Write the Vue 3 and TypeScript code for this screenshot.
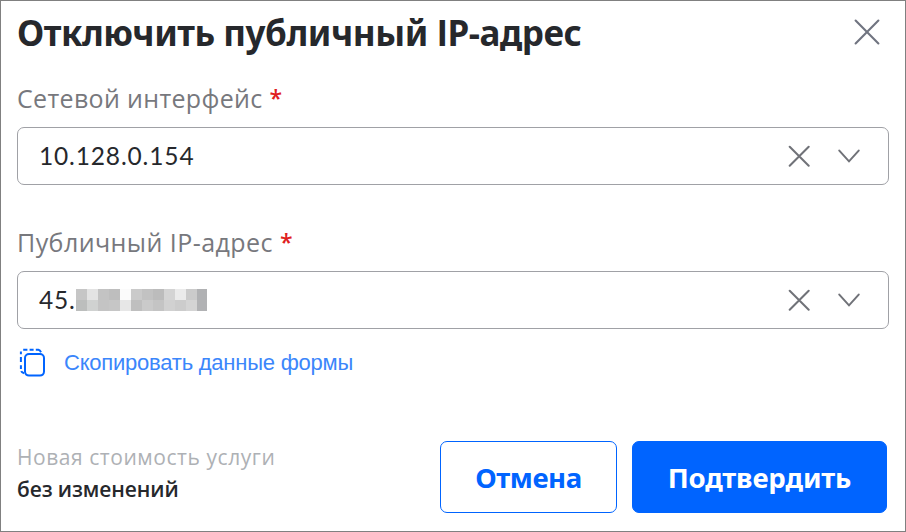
<script setup lang="ts">
interface Field {
  id: string
  label: string
  value: string
  masked: boolean
}

const fields: Field[] = [
  { id: 'iface', label: 'Сетевой интерфейс', value: '10.128.0.154', masked: false },
  { id: 'ip', label: 'Публичный IP-адрес', value: '45.', masked: true },
]

const mosaic: string[][] = [
  ['#c6c6c6', '#e3e3e3', '#c3c3c3', '#bebebe', '#fbfbfb', '#cacaca', '#c2c2c2', '#bcbcbc', '#d4d4d4', '#ebebeb', '#cbcbcb', '#b0b1b3'],
  ['#bcbebd', '#d0d2d1', '#c4c4c4', '#c6c6c6', '#e7e7e7', '#bfbfbf', '#cacaca', '#c4c4c4', '#d1d1d1', '#cccccc', '#d4d4d4', '#b1b2b4'],
]
</script>

<template>
  <section class="dialog">
    <header class="header">
      <h1 class="title">Отключить публичный <span class="latin">I</span>P-адрес</h1>
      <svg class="close" width="26" height="26" viewBox="0 0 26 26">
        <path d="M1.6 1.6 24.4 24.4M24.4 1.6 1.6 24.4" />
      </svg>
    </header>

    <div v-for="field in fields" :key="field.id" class="field">
      <div class="label" :class="field.id"><span>{{ field.label }}</span><span class="star">*</span></div>
      <div class="control">
        <span class="value" :class="{ partial: field.masked }">{{ field.value }}</span>
        <svg v-if="field.masked" class="mosaic" width="132" height="22" shape-rendering="crispEdges">
          <g v-for="(row, r) in mosaic" :key="r">
            <rect v-for="(color, c) in row" :key="c" :x="c * 11" :y="r * 11" :width="c === 11 ? 10 : 11" height="11" :fill="color" />
          </g>
        </svg>
        <svg class="icon clear" width="22" height="22" viewBox="0 0 22 22">
          <path d="M1.7 1.7 20.7 20.7M20.7 1.7 1.7 20.7" />
        </svg>
        <svg class="icon" width="22" height="22" viewBox="0 0 22 22">
          <path d="M1.3 5.6 11 16.3 20.7 5.6" />
        </svg>
      </div>
    </div>

    <div class="copy">
      <svg width="28" height="30" viewBox="0 0 28 30">
        <rect x="6" y="6" width="19" height="21.6" rx="4" />
        <path d="M4.2 1.8H8.4M10.6 1.8H14.6M16.8 1.8H19.4Q21 2.2 22 4.2M1.9 3.6V6.2M1.9 9V14M1.9 17.2V21M2.2 23.2Q2.8 24.6 5 25.2" />
      </svg>
      <span class="link">Скопировать данные формы</span>
    </div>

    <footer class="footer">
      <div class="cost">
        <div class="caption"><span>Новая стоимость услуги</span></div>
        <div class="amount"><span>без изменений</span></div>
      </div>
      <button class="btn cancel" type="button"><span>Отмена</span></button>
      <button class="btn confirm" type="button"><span>Подтвердить</span></button>
    </footer>
  </section>
</template>

<style>
body {
  background: #fff;
}
</style>

<style scoped>
.dialog {
  box-sizing: border-box;
  display: flex;
  flex-direction: column;
  width: 906px;
  height: 532px;
  padding: 0 16px;
  border: 1px solid #808080;
  background: #fff;
  color: #26282c;
  font-family: "Open Sans", "Noto Sans", sans-serif;
  overflow: hidden;
}
.header {
  display: flex;
  justify-content: space-between;
  height: 81px;
}
.title {
  margin: 7px 0 0;
  font-family: "Noto Sans", sans-serif;
  font-size: 35px;
  line-height: 50px;
  font-weight: 700;
  letter-spacing: -0.47px;
  white-space: nowrap;
}
.latin {
  font-family: "Open Sans", sans-serif;
}
.close {
  margin: 18px 9px 0 0;
  fill: none;
  stroke: #707480;
  stroke-width: 2.1;
  stroke-linecap: round;
}
.field {
  height: 144px;
}
.label {
  display: flex;
  gap: 7px;
  height: 45px;
  line-height: 33px;
  font-size: 25px;
  letter-spacing: 0.33px;
  color: #77787d;
  white-space: nowrap;
}
.label.ip {
  letter-spacing: 0.44px;
}
.star {
  color: #e02020;
  font-size: 23px;
  font-weight: 600;
}
.control {
  box-sizing: border-box;
  display: flex;
  align-items: center;
  width: 872px;
  height: 58px;
  padding: 0 28px 0 21px;
  border: 1px solid #a0a1a6;
  border-radius: 7px;
}
.value {
  font-family: "Lato", sans-serif;
  font-size: 24.5px;
  line-height: 32px;
  letter-spacing: 0.85px;
}
.partial {
  width: 37px;
}
.icon {
  fill: none;
  stroke: #707278;
  stroke-width: 2;
  stroke-linecap: round;
}
.clear {
  margin: 0 28px 0 auto;
}
.copy {
  display: flex;
  align-items: center;
  gap: 17px;
  height: 32px;
  margin-top: -23px;
  padding-left: 2px;
}
.copy svg {
  fill: none;
  stroke: #0064ff;
  stroke-width: 2;
}
.link {
  font-family: "Liberation Sans", sans-serif;
  font-size: 22px;
  line-height: 28px;
  letter-spacing: -0.23px;
  color: #3b86fb;
  white-space: nowrap;
}
.footer {
  display: flex;
  gap: 15px;
  margin-top: 62px;
}
.cost {
  width: 408px;
  white-space: nowrap;
}
.caption {
  height: 32px;
  line-height: 32px;
  font-size: 21px;
  letter-spacing: 0.55px;
  color: #aeb1b5;
}
.amount {
  line-height: 32px;
  font-size: 21px;
  font-weight: 600;
  letter-spacing: -0.1px;
}
.btn {
  box-sizing: border-box;
  height: 72px;
  padding: 0;
  border: 1px solid #0064ff;
  border-radius: 7px;
  font-family: "Noto Sans", sans-serif;
  font-size: 27.6px;
  font-weight: 700;
  letter-spacing: -0.4px;
  white-space: nowrap;
}
.cancel {
  width: 177px;
  background: #fff;
  color: #0064ff;
}
.confirm {
  width: 255px;
  background: #0064ff;
  color: #fff;
  letter-spacing: -0.15px;
}
</style>
